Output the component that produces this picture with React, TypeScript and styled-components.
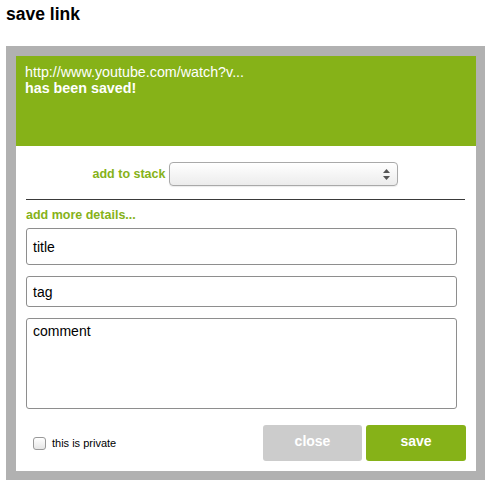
import React from "react";
import styled, { createGlobalStyle } from "styled-components";

const green = "#86b218";

const Global = createGlobalStyle`
  html, body { margin: 0; padding: 0; background: #fff; }
  body { font-family: "Liberation Sans", Arial, sans-serif; color: #000; }
  * { box-sizing: border-box; }
`;

const Page = styled.div`
  width: 490px;
  height: 481px;
  padding: 4px 0 0 6px;
  overflow: hidden;
`;

const Heading = styled.h1`
  margin: 0;
  font-size: 17.5px;
  font-weight: bold;
  line-height: 20px;
  height: 42px;
`;

const Frame = styled.div`
  width: 479px;
  border: 10px solid #b1b1b1;
  border-right-width: 9px;
  border-bottom-width: 9px;
  background: #fff;
`;

const Banner = styled.div`
  background: ${green};
  height: 90px;
  padding: 8px 9px;
  color: #fff;
  font-size: 14.3px;
  line-height: 16px;
`;

const BannerStrong = styled.div`
  font-weight: bold;
`;

const Body = styled.div`
  padding: 16px 11px 10px 10px;
  display: flex;
  flex-direction: column;
`;

const StackRow = styled.div`
  display: flex;
  align-items: center;
  justify-content: center;
  gap: 4px;
  height: 24px;
`;

const GreenLabel = styled.span`
  color: ${green};
  font-weight: bold;
  font-size: 12.5px;
`;

const Select = styled.div`
  position: relative;
  width: 229px;
  height: 24px;
  border: 1px solid #a9a9a9;
  border-radius: 4px;
  background: linear-gradient(#ffffff, #ececec);
  box-shadow: 0 1px 1px rgba(0,0,0,0.08);
`;

const Arrows = styled.svg`
  position: absolute;
  right: 7px;
  top: 6px;
`;

const Rule = styled.hr`
  margin: 13px 0 0 0;
  border: none;
  border-top: 1px solid #3a3a3a;
  height: 0;
`;

const Details = styled.div`
  margin-top: 7px;
  height: 14px;
  line-height: 14px;
`;

const Field = styled.div<{ $h: number; $gap: number }>`
  margin-top: ${(p) => p.$gap}px;
  width: 431px;
  height: ${(p) => p.$h}px;
  border: 1px solid #8e8e8e;
  border-radius: 3px;
  font-size: 14px;
  padding: 0 6px;
  display: flex;
  align-items: ${(p) => (p.$h > 50 ? "flex-start" : "center")};
  padding-top: ${(p) => (p.$h > 50 ? 4 : 0)}px;
`;

const Footer = styled.div`
  margin-top: 16px;
  display: flex;
  align-items: center;
`;

const Private = styled.label`
  display: flex;
  align-items: center;
  gap: 6px;
  font-size: 11px;
  margin-left: 7px;
  flex: 1;
`;

const Check = styled.span`
  width: 13px;
  height: 13px;
  border: 1px solid #999;
  border-radius: 3px;
  background: linear-gradient(#fff, #e6e6e6);
`;

const Button = styled.button<{ $bg: string; $w: number }>`
  width: ${(p) => p.$w}px;
  height: 36px;
  border: none;
  border-radius: 3px;
  background: ${(p) => p.$bg};
  color: #fff;
  font-family: "Liberation Sans", Arial, sans-serif;
  font-weight: bold;
  font-size: 14px;
  padding: 0 0 4px 0;
`;

const Buttons = styled.div`
  display: flex;
  gap: 4px;
  margin-right: -1px;
`;

export default function App() {
  return (
    <Page>
      <Global />
      <Heading>save link</Heading>
      <Frame>
        <Banner>
          <div>http://www.youtube.com/watch?v...</div>
          <BannerStrong>has been saved!</BannerStrong>
        </Banner>
        <Body>
          <StackRow>
            <GreenLabel>add to stack</GreenLabel>
            <Select>
              <Arrows width="7" height="11" viewBox="0 0 7 11">
                <path d="M3.5 0 L7 4 L0 4 Z" fill="#555" />
                <path d="M3.5 11 L7 7 L0 7 Z" fill="#555" />
              </Arrows>
            </Select>
          </StackRow>
          <Rule />
          <Details>
            <GreenLabel>add more details...</GreenLabel>
          </Details>
          <Field $h={37} $gap={7}>title</Field>
          <Field $h={31} $gap={11}>tag</Field>
          <Field $h={91} $gap={11}>comment</Field>
          <Footer>
            <Private>
              <Check />
              this is private
            </Private>
            <Buttons>
              <Button $bg="#cccccc" $w={99}>close</Button>
              <Button $bg={green} $w={100}>save</Button>
            </Buttons>
          </Footer>
        </Body>
      </Frame>
    </Page>
  );
}
